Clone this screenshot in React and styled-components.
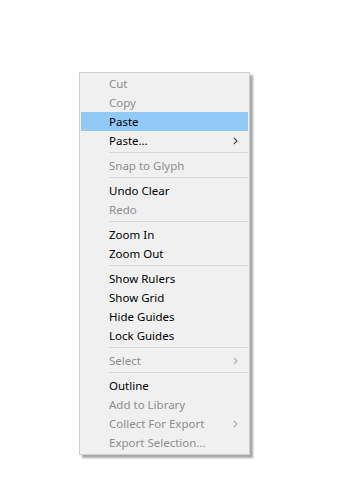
import React from 'react'
import styled, { createGlobalStyle } from 'styled-components'

const GlobalStyle = createGlobalStyle`
    html, body {
        margin:0;
        padding:0;
        background:#ffffff;
    }
`

const groups = [
    [
        { label: 'Cut', disabled: true },
        { label: 'Copy', disabled: true },
        { label: 'Paste', active: true },
        { label: 'Paste...', sub: true },
    ],
    [{ label: 'Snap to Glyph', disabled: true }],
    [
        { label: 'Undo Clear' },
        { label: 'Redo', disabled: true },
    ],
    [
        { label: 'Zoom In' },
        { label: 'Zoom Out' },
    ],
    [
        { label: 'Show Rulers' },
        { label: 'Show Grid' },
        { label: 'Hide Guides' },
        { label: 'Lock Guides' },
    ],
    [{ label: 'Select', disabled: true, sub: true }],
    [
        { label: 'Outline' },
        { label: 'Add to Library', disabled: true },
        { label: 'Collect For Export', disabled: true, sub: true },
        { label: 'Export Selection...', disabled: true },
    ],
]

const Chevron = ({ disabled }) => (
    <svg width="5" height="8" viewBox="0 0 5 8">
        <path d="M0.8 0.8 L4 4 L0.8 7.2" fill="none"
            stroke={disabled ? '#a8a8a8' : '#444'} strokeWidth="1.1" />
    </svg>
)

const App = () => {
    return (
        <Page>
            <GlobalStyle />
            <Menu>
                {groups.map((group, gi) => (
                    <React.Fragment key={gi}>
                        {gi > 0 && <Separator />}
                        {group.map((item) => (
                            <Item key={item.label} $active={item.active} $disabled={item.disabled}>
                                <span>{item.label.replace('...', '\u2026')}</span>
                                {item.sub && <Chevron disabled={item.disabled} />}
                            </Item>
                        ))}
                    </React.Fragment>
                ))}
            </Menu>
        </Page>
    )
}

const Page = styled.div`
    width:358px;
    height:490px;
    padding:72px 0 0 79px;
    box-sizing:border-box;
`

const Menu = styled.div`
    width:171px;
    box-sizing:border-box;
    background:#f0f0f0;
    border:1px solid #cfcfcf;
    padding:1px 1px 2px 1px;
    box-shadow:3px 3px 2px rgba(0,0,0,0.35);
    font-family:'Noto Sans', 'Open Sans', sans-serif;
    font-size:11.5px;
`

const Item = styled.div`
    display:flex;
    align-items:center;
    justify-content:space-between;
    box-sizing:border-box;
    height:19px;
    padding:1px 10px 0 28px;
    background:${(props) => props.$active ? '#91c9f7' : 'transparent'};
    color:${(props) => props.$disabled ? '#8d8d8d' : '#000000'};
    line-height:18px;
    white-space:nowrap;
`

const Separator = styled.div`
    height:1px;
    margin:2px 0 3px 28px;
    background:#d7d7d7;
`

export default App
